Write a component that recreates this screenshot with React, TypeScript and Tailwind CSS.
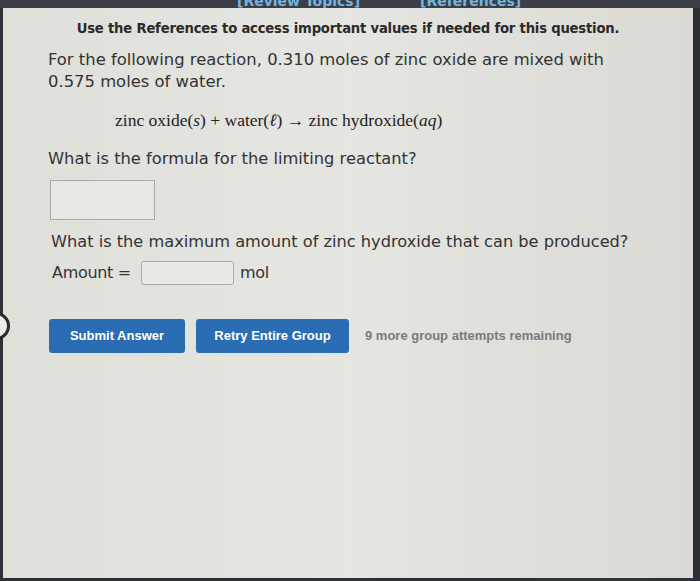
export default function App() {
  return (
    <div className="flex h-[581px] w-[700px] flex-col overflow-hidden bg-[#2e3038]">
      {/* top bar with cut-off links */}
      <div className="relative h-[8px] shrink-0 overflow-hidden bg-[#3b3e47]">
        <div className="absolute -top-[9px] left-[237px] font-['DejaVu_Sans',sans-serif] text-[14px] font-bold text-[#74b4e0]">
          [Review Topics]
        </div>
        <div className="absolute -top-[9px] left-[420px] font-['DejaVu_Sans',sans-serif] text-[14px] font-bold text-[#74b4e0]">
          [References]
        </div>
      </div>

      <div className="flex flex-1 pb-[3px]">
        <div className="relative ml-[3px] mr-[7px] flex-1 bg-gradient-to-r from-[#e0e0db] via-[#e5e5e1] to-[#dbdad4] font-['DejaVu_Sans',sans-serif] text-[#333]">
          {/* dark ring at left edge */}
          <div className="absolute left-[-21px] top-[304px] h-[28px] w-[28px] rounded-full border-[3px] border-[#2a2a2a] bg-[#ececea]" />

          <p className="mt-[11px] text-center text-[13.2px] font-bold tracking-[-0.2px] text-[#2a2a2a]">
            Use the References to access important values if needed for this question.
          </p>

          <div className="pl-[45px]">
            <p className="mt-[10px] w-[580px] text-[16.4px] leading-[22px]">
              For the following reaction, 0.310 moles of zinc oxide are mixed with 0.575 moles of water.
            </p>

            <p className="mt-[14px] pl-[67px] font-['Liberation_Serif',serif] text-[17.5px] text-[#222]">
              zinc oxide(<i>s</i>) + water(<i>ℓ</i>) → zinc hydroxide(<i>aq</i>)
            </p>

            <p className="mt-[14px] text-[16.3px]">What is the formula for the limiting reactant?</p>

            <div className="ml-[2px] mt-[9px] h-[40px] w-[105px] border-[1.5px] border-[#a9a9a6] bg-[#e8e8e5]" />

            <p className="mt-[10px] pl-[3px] text-[16.2px]">
              What is the maximum amount of zinc hydroxide that can be produced?
            </p>

            <div className="mt-[6px] flex items-center pl-[4px] text-[16px] tracking-[-0.3px]">
              <span>Amount =</span>
              <div className="ml-[10px] h-[24px] w-[93px] rounded-[3px] border-[1.5px] border-[#a9a9a6] bg-[#e9e9e6]" />
              <span className="ml-[6px]">mol</span>
            </div>

            <div className="mt-[34px] flex items-center font-['Liberation_Sans',sans-serif] text-[13px] font-bold">
              <button className="ml-[1px] h-[34px] w-[136px] rounded-[3px] bg-[#2a6db2] text-white">Submit Answer</button>
              <button className="ml-[11px] h-[34px] w-[153px] rounded-[3px] bg-[#2a6db2] text-white">Retry Entire Group</button>
              <span className="ml-[16px] text-[#7a7a78]">9 more group attempts remaining</span>
            </div>
          </div>
        </div>
      </div>
    </div>
  )
}
